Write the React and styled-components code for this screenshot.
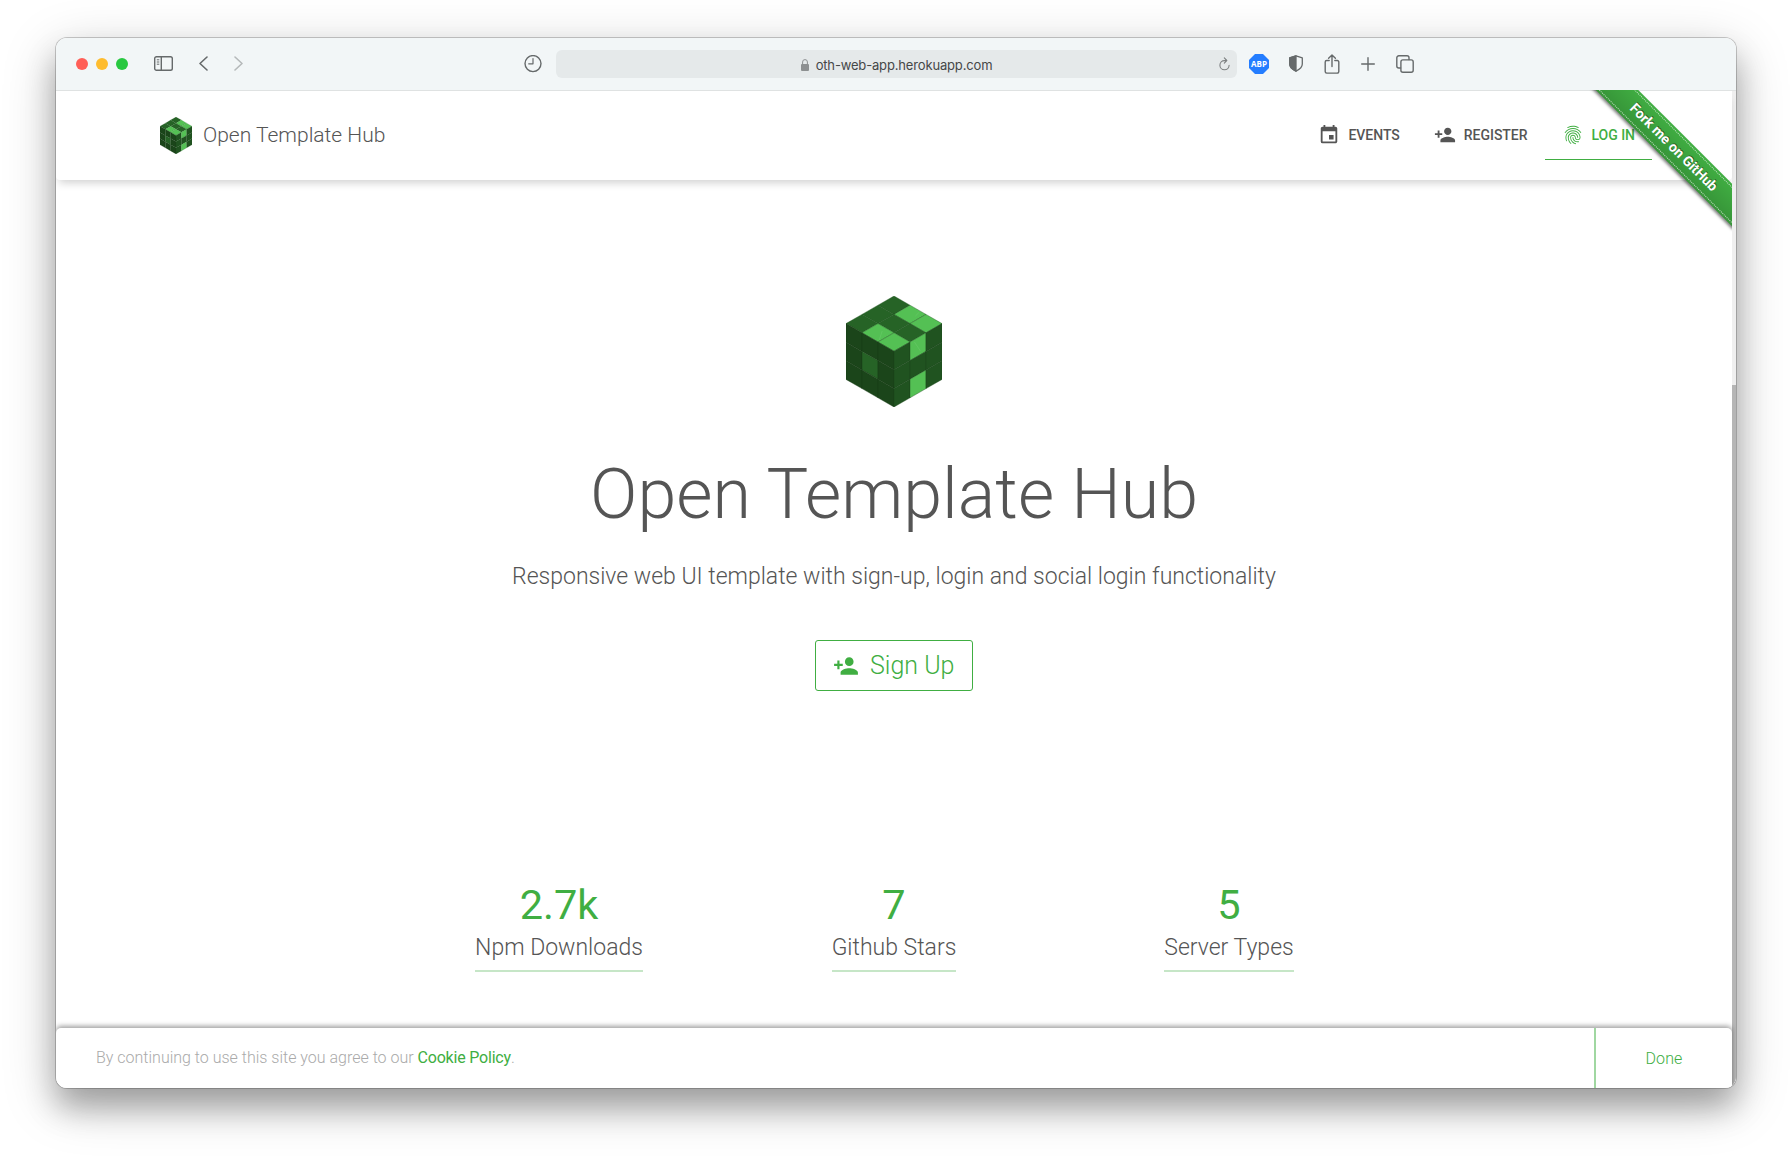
import React from "react";
import styled, { createGlobalStyle } from "styled-components";
import { MdEvent, MdPersonAdd, MdFingerprint } from "react-icons/md";

const GREEN = "#40ae42";
const INK = "#555";

const Global = createGlobalStyle`
  *, *::before, *::after { box-sizing: border-box; }
  html, body, #root { height: 100%; }
  body { margin: 0; background: #fff; overflow: hidden; font-family: Roboto, sans-serif; color: ${INK}; }
`;

const Desktop = styled.div`
  height: 1162px;
  padding: 38px 56px 74px;
`;
const BrowserWindow = styled.div`
  height: 1050px;
  display: flex;
  flex-direction: column;
  border-radius: 11px;
  overflow: hidden;
  background: #fff;
  box-shadow: 0 0 0 1px rgba(0, 0, 0, 0.2), 0 20px 30px rgba(0, 0, 0, 0.26), 0 14px 54px rgba(0, 0, 0, 0.22);
`;

/* Browser toolbar */
const Toolbar = styled.div`
  flex: none;
  height: 53px;
  display: flex;
  align-items: center;
  padding-left: 20px;
  background: #f2f6f7;
  border-bottom: 1px solid #dfe2e2;
  color: #666a6b;
  svg { display: block; flex: none; }
`;
const Lights = styled.div`
  display: flex;
  gap: 8px;
  margin-right: 26px;
`;
const Light = styled.i`
  width: 12px;
  height: 12px;
  border-radius: 50%;
  background: ${(p) => p.$color};
`;
const History = styled.div`
  display: flex;
  align-items: center;
  gap: 26px;
  margin-right: 281px;
  padding-bottom: 1px;
`;
const Address = styled.div`
  display: flex;
  align-items: center;
  justify-content: center;
  width: 681px;
  height: 28px;
  margin: 0 12px 0 13.5px;
  padding: 0 7px 0 19px;
  border-radius: 6px;
  background: #e5e9ea;
  color: #454748;
  font: 13px/28px Inter, sans-serif;
`;
const Url = styled.span`
  flex: 1;
  display: flex;
  align-items: center;
  justify-content: center;
  gap: 7px;
  letter-spacing: -0.16px;
  padding-top: 1px;
`;
const Tools = styled.div`
  display: flex;
  align-items: center;
  gap: 20px;
  padding-bottom: 1px;
`;

/* Page */
const Viewport = styled.div`
  flex: 1;
  min-height: 0;
  display: flex;
  background: #fff;
`;
const Page = styled.div`
  position: relative;
  flex: 1;
  display: flex;
  flex-direction: column;
`;
const ScrollTrack = styled.div`
  width: 4px;
  padding-top: 294px;
  background: #efefef;
`;
const ScrollThumb = styled.div`
  height: 100%;
  background: #b5b5b5;
`;
const NavBar = styled.header`
  flex: none;
  display: flex;
  align-items: center;
  justify-content: space-between;
  height: 89px;
  padding: 0 80px 0 104px;
  border-radius: 0 0 4px 4px;
  background: #fff;
  box-shadow: 0 6px 8px -3px rgba(0, 0, 0, 0.18);
`;
const Brand = styled.a`
  display: flex;
  align-items: center;
  gap: 11px;
  font-size: 21px;
  font-weight: 300;
`;
const BrandName = styled.span`
  padding-bottom: 2px;
`;
const Menu = styled.nav`
  display: flex;
  height: 48px;
`;
const MenuItem = styled.a`
  display: flex;
  align-items: center;
  gap: 8px;
  padding: 0 17px;
  border-bottom: 1px solid ${(p) => (p.$active ? GREEN : "transparent")};
  color: ${(p) => (p.$active ? GREEN : INK)};
  font-size: 14px;
  font-weight: 500;
  letter-spacing: -0.03px;
  white-space: nowrap;
`;
const Ribbon = styled.div`
  position: absolute;
  top: -1px;
  right: 0;
  width: 157px;
  height: 157px;
  overflow: hidden;
  pointer-events: none;
`;
const RibbonBand = styled.div`
  position: absolute;
  top: 42px;
  right: -42px;
  width: 200px;
  height: 30px;
  padding: 2px 0;
  transform: rotate(45deg);
  background: ${GREEN} linear-gradient(rgba(0, 0, 0, 0), rgba(0, 0, 0, 0.15));
  box-shadow: 0 2px 3px rgba(0, 0, 0, 0.5);
`;
const RibbonText = styled.div`
  height: 26px;
  border: dotted rgba(255, 255, 255, 0.7);
  border-width: 1px 0;
  color: #fff;
  font-size: 14px;
  font-weight: 700;
  line-height: 24px;
  text-align: center;
  text-shadow: 0 -1px rgba(0, 0, 0, 0.5);
`;

const Hero = styled.section`
  display: flex;
  flex-direction: column;
  align-items: center;
  padding-top: 116px;
`;
const Title = styled.h1`
  margin: 43px 0 0;
  font-size: 70px;
  line-height: 88px;
  font-weight: 300;
`;
const Subtitle = styled.p`
  margin: 22px 0 0;
  font-size: 23px;
  line-height: 34px;
  font-weight: 300;
`;
const SignUp = styled.button`
  display: flex;
  align-items: center;
  gap: 11px;
  width: 158px;
  height: 51px;
  margin-top: 46px;
  padding: 0 17px;
  border: 1px solid ${GREEN};
  border-radius: 3px;
  background: #fff;
  color: ${GREEN};
  font: 300 25px/30px Roboto, sans-serif;
  white-space: nowrap;
`;
const Stats = styled.section`
  display: grid;
  grid-template-columns: repeat(3, 335px);
  justify-content: center;
  margin-top: 189px;
`;
const Stat = styled.div`
  display: flex;
  flex-direction: column;
  align-items: center;
`;
const Value = styled.div`
  color: ${GREEN};
  font-size: 41.5px;
  line-height: 50px;
`;
const Label = styled.div`
  height: 42px;
  border-bottom: 2px solid #c6e6c7;
  font-size: 23px;
  line-height: 36px;
  font-weight: 300;
`;
const CookieBar = styled.footer`
  flex: none;
  display: flex;
  justify-content: space-between;
  height: 60px;
  margin-top: auto;
  border-radius: 5px 5px 0 0;
  background: #fff;
  box-shadow: 0 -2px 5px rgba(0, 0, 0, 0.38);
  font-size: 16px;
  line-height: 60px;
  font-weight: 300;
`;
const Notice = styled.p`
  margin: 0;
  padding: 0 0 0 40px;
  color: #aaa;
`;
const PolicyLink = styled.a`
  color: ${GREEN};
  font-weight: 400;
  letter-spacing: -0.2px;
`;
const Done = styled.button`
  width: 138px;
  padding: 2px 0 0;
  border: 0;
  border-left: 2px solid #a0d7a1;
  background: none;
  color: ${GREEN};
  font: 300 16px/58px Roboto, sans-serif;
  letter-spacing: 0.1px;
`;

const iso = (o, u, v) => (a, b, w = 1, h = 1) => {
  const pt = (i, j) => `${o[0] + u[0] * i + v[0] * j},${o[1] + u[1] * i + v[1] * j}`;
  return [pt(a, b), pt(a + w, b), pt(a + w, b + h), pt(a, b + h)].join(" ");
};
const X = 15.9;
const Y = 9.2;
const Z = 18.6;
const topFace = iso([47.7, 0], [X, Y], [-X, Y]);
const leftFace = iso([0, 27.6], [X, Y], [0, Z]);
const rightFace = iso([47.7, 55.2], [X, -Y], [0, Z]);
const GRID = [0, 1, 2].flatMap((a) => [0, 1, 2].map((b) => [a, b]));
const FACES = [
  { face: topFace, base: "#266326", line: "#1d531d", lit: ["1,0", "2,0", "1,2", "2,2"], color: "#54c054" },
  { face: leftFace, base: "#1b451a", line: "#163b15", lit: ["1,1"], color: "#266326" },
  { face: rightFace, base: "#205320", line: "#194519", lit: ["1,0", "1,2"], color: "#54c054" },
];

function Cube({ width, height }) {
  return (
    <svg width={width} height={height} viewBox="0 0 95.4 111" preserveAspectRatio="none">
      {FACES.map(({ face, base, line, lit, color }) =>
        GRID.map(([a, b]) => (
          <polygon
            key={base + a + b}
            points={face(a, b)}
            fill={lit.includes(`${a},${b}`) ? color : base}
            stroke={line}
            strokeWidth="0.4"
          />
        ))
      )}
      <path d="M36 35l-3 9M69 20l4-4M68 46l6 9" stroke="#69c969" strokeWidth=".6" />
    </svg>
  );
}

function Stroke({ w, h, sw = 1.4, children, color = "currentColor" }) {
  return (
    <svg width={w} height={h} viewBox={`0 0 ${w} ${h}`} fill="none" stroke={color} strokeWidth={sw} strokeLinecap="round" strokeLinejoin="round">
      {children}
    </svg>
  );
}

const STATS = [
  ["2.7k", "Npm Downloads"],
  ["7", "Github Stars"],
  ["5", "Server Types"],
];

export default function App() {
  return (
    <Desktop>
      <Global />
      <BrowserWindow>
        <Toolbar>
          <Lights>
            <Light $color="#ff5f57" />
            <Light $color="#febc2e" />
            <Light $color="#28c840" />
          </Lights>
          <History>
            <Stroke w={19} h={15}>
              <rect x=".7" y=".7" width="17.6" height="13.6" rx="1.8" />
              <path d="M7.3 1v13" />
              <path d="M3.2 3.8h1.7M3.2 6h1.7M3.2 8.2h1.7" strokeWidth="1" />
            </Stroke>
            <Stroke w={9} h={15} sw={1.6}>
              <path d="M8 1L1 7.5L8 14" />
            </Stroke>
            <Stroke w={9} h={15} sw={1.6} color="#b5b9ba">
              <path d="M1 1L8 7.5L1 14" />
            </Stroke>
          </History>
          <Stroke w={18} h={18}>
            <circle cx="9" cy="8.6" r="8" />
            <path d="M9 3.6v5.2H4.7" strokeWidth="1.2" />
          </Stroke>
          <Address>
            <Url>
              <svg width="8" height="12" viewBox="0 0 8 12" fill="#8d9091">
                <rect y="5" width="8" height="7" rx="1" />
                <path d="M1.6 5.5V3a2.4 2.4 0 0 1 4.8 0v2.5" fill="none" stroke="#8d9091" strokeWidth="1" />
              </svg>
              oth-web-app.herokuapp.com
            </Url>
            <Stroke w={11} h={14} sw={1.1} color="#7d8081">
              <path d="M7.4 3.6H5.5A4.6 4.6 0 1 0 10.1 8.3M5.3 .9l2.5 2.6L5.3 6.1" />
            </Stroke>
          </Address>
          <Tools>
            <svg width="20" height="20" viewBox="0 0 20 20">
              <path d="M6 0h8l6 6v8l-6 6H6l-6-6V6z" fill="#247dff" />
              <text x="10" y="12.9" textAnchor="middle" fontSize="8" fontWeight="700" fontFamily="Open Sans, sans-serif" fill="#fff" textLength="16">ABP</text>
            </svg>
            <Stroke w={14} h={17} sw={1.3}>
              <path d="M7 .8l6.3 2.1v6.2c0 3-2.6 5.3-6.3 7.1C3.3 14.4 .7 12.1 .7 9.1V2.9z" />
              <path d="M7 .8v15.4C3.3 14.4 .7 12.1 .7 9.1V2.9z" fill="currentColor" />
            </Stroke>
            <Stroke w={18} h={20} sw={1.4}>
              <path d="M6.2 6.5H3.7a1.5 1.5 0 0 0-1.5 1.5v9.6a1.5 1.5 0 0 0 1.5 1.5h10.6a1.5 1.5 0 0 0 1.5-1.5V8a1.5 1.5 0 0 0-1.5-1.5h-2.5M9 12.5V1.2M5.6 4.3L9 1l3.4 3.3" />
            </Stroke>
            <Stroke w={14} h={14} sw={1.4}>
              <path d="M7 .7v12.6M.7 7h12.6" />
            </Stroke>
            <Stroke w={19} h={18} sw={1.4}>
              <rect x="5.9" y="4.9" width="12.3" height="12.3" rx="2" />
              <path d="M5.5 13H3.8a2 2 0 0 1-2-2V2.8a2 2 0 0 1 2-2H12a2 2 0 0 1 2 2v1.7" />
            </Stroke>
          </Tools>
        </Toolbar>
        <Viewport>
          <Page>
            <NavBar>
              <Brand>
                <Cube width={32} height={37} />
                <BrandName>Open Template Hub</BrandName>
              </Brand>
              <Menu>
                <MenuItem><MdEvent size={22} />EVENTS</MenuItem>
                <MenuItem><MdPersonAdd size={22} />REGISTER</MenuItem>
                <MenuItem $active><MdFingerprint size={22} />LOG IN</MenuItem>
              </Menu>
            </NavBar>
            <Hero>
              <Cube width={96} height={111} />
              <Title>Open Template Hub</Title>
              <Subtitle>Responsive web UI template with sign-up, login and social login functionality</Subtitle>
              <SignUp><MdPersonAdd size={26} />Sign Up</SignUp>
            </Hero>
            <Stats>
              {STATS.map(([value, label]) => (
                <Stat key={label}>
                  <Value>{value}</Value>
                  <Label>{label}</Label>
                </Stat>
              ))}
            </Stats>
            <CookieBar>
              <Notice>
                By continuing to use this site you agree to our <PolicyLink>Cookie Policy</PolicyLink>.
              </Notice>
              <Done>Done</Done>
            </CookieBar>
            <Ribbon>
              <RibbonBand>
                <RibbonText>Fork me on GitHub</RibbonText>
              </RibbonBand>
            </Ribbon>
          </Page>
          <ScrollTrack>
            <ScrollThumb />
          </ScrollTrack>
        </Viewport>
      </BrowserWindow>
    </Desktop>
  );
}
